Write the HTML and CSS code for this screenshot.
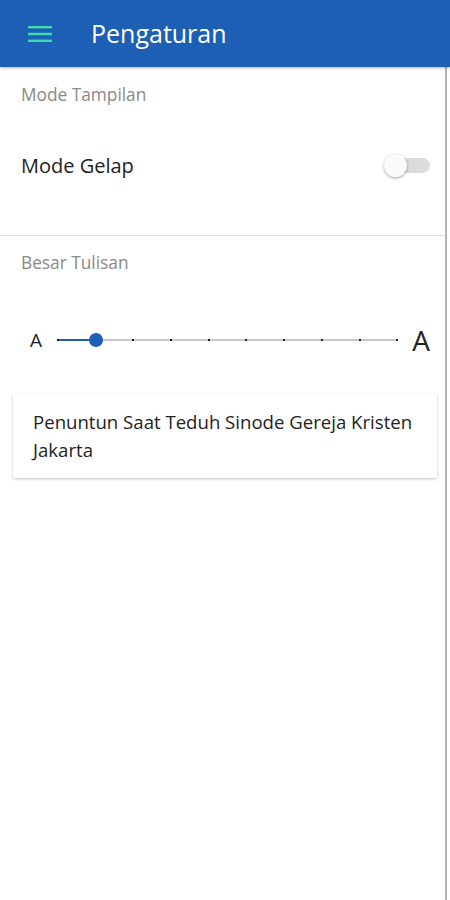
FILE: index.html
```html
<!DOCTYPE html>
<html lang="id">
<head>
<meta charset="utf-8">
<title>Pengaturan</title>
<link rel="stylesheet" href="styles.css">
</head>
<body>
<header class="appbar">
  <svg class="menu" width="24" height="18" viewBox="0 0 24 18">
    <rect x="0" y="1" width="24" height="2.4" fill="#3fdcaa"/>
    <rect x="0" y="7.8" width="24" height="2.4" fill="#3fdcaa"/>
    <rect x="0" y="14.6" width="24" height="2.4" fill="#3fdcaa"/>
  </svg>
  <h1 class="title">Pengaturan</h1>
</header>
<main class="content">
  <section class="section">
    <div class="label">Mode Tampilan</div>
    <div class="row">
      <span class="row-text">Mode Gelap</span>
      <span class="toggle"><span class="knob"></span></span>
    </div>
  </section>
  <section class="section second">
    <div class="label">Besar Tulisan</div>
    <div class="slider-row">
      <span class="a-small">A</span>
      <div class="slider">
        <div class="track"></div>
        <div class="fill"></div>
        <div class="ticks">
          <i></i><i></i><i></i><i></i><i></i><i></i><i></i><i></i><i></i><i></i>
        </div>
        <div class="thumb"></div>
      </div>
      <span class="a-big">A</span>
    </div>
    <div class="card">Penuntun Saat Teduh Sinode Gereja Kristen Jakarta</div>
  </section>
</main>
</body>
</html>
```
FILE: styles.css
```css
html, body {
  margin: 0;
  padding: 0;
  background: #ffffff;
  font-family: "Open Sans", "Noto Sans", sans-serif;
}
body {
  width: 450px;
  height: 900px;
  overflow: hidden;
}
.appbar {
  height: 67px;
  background: #1c5fb4;
  display: flex;
  align-items: center;
  padding-left: 28px;
  box-sizing: border-box;
  box-shadow: 0 1px 3px rgba(0,0,0,0.3);
  position: relative;
  z-index: 2;
}
.menu {
  display: block;
  margin-top: 1px;
}
.title {
  margin: -2px 0 0 39px;
  font-size: 25px;
  font-weight: 400;
  color: #ffffff;
  line-height: 32px;
}
.content {
  width: 445px;
  height: 833px;
  border-right: 2px solid #b4b4b4;
}
.label {
  padding-left: 21px;
  padding-top: 16px;
  font-size: 17.3px;
  line-height: 24px;
  color: #8a8a8a;
}
.row {
  display: flex;
  align-items: center;
  justify-content: space-between;
  padding: 0 15px 0 21px;
  height: 60px;
  margin-top: 28px;
  margin-bottom: 40px;
}
.row-text {
  font-size: 20px;
  color: #222;
}
.toggle {
  position: relative;
  width: 37px;
  height: 15px;
  border-radius: 8px;
  background: #dcdcdc;
}
.knob {
  position: absolute;
  left: -9px;
  top: -4px;
  width: 23px;
  height: 23px;
  border-radius: 50%;
  background: #fafafa;
  box-shadow: 0 1px 3px rgba(0,0,0,0.35);
}
.second {
  border-top: 1px solid #e2e2e2;
}
.second .label {
  padding-top: 15px;
}
.slider-row {
  display: flex;
  align-items: center;
  padding: 0 15px 0 30px;
  margin-top: 50px;
  height: 30px;
}
.a-small {
  font-size: 19px;
  color: #222;
  width: 27px;
}
.slider {
  position: relative;
  flex: 1;
  height: 14px;
  margin-right: 14px;
}
.track {
  position: absolute;
  left: 0;
  right: 0;
  top: 6px;
  height: 2px;
  background: #c8c8c8;
}
.fill {
  position: absolute;
  left: 0;
  width: 39px;
  top: 6px;
  height: 2px;
  background: #1c5fb4;
}
.ticks {
  position: absolute;
  left: 0;
  right: 0;
  top: 6px;
  display: flex;
  justify-content: space-between;
}
.ticks i {
  display: block;
  width: 2px;
  height: 2px;
  background: #222;
}
.thumb {
  position: absolute;
  left: 32px;
  top: 0;
  width: 14px;
  height: 14px;
  border-radius: 50%;
  background: #1c5fb4;
}
.a-big {
  font-size: 28px;
  color: #222;
  line-height: 30px;
}
.card {
  margin: 39px 8px 0 13px;
  padding: 14px 16px 14px 20px;
  font-size: 18.6px;
  line-height: 28px;
  color: #222;
  background: #fff;
  box-shadow: 0 1px 3px rgba(0,0,0,0.25);
  border-radius: 2px;
}
```
